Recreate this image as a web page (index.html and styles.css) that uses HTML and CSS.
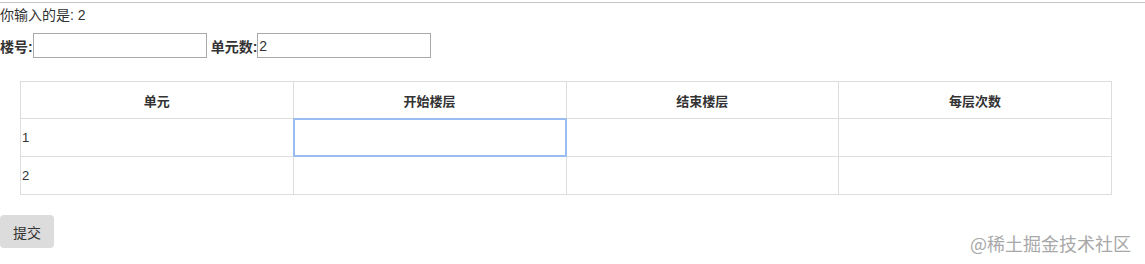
FILE: index.html
```html
<!DOCTYPE html>
<html lang="zh">
<head>
<meta charset="utf-8">
<link rel="stylesheet" href="styles.css">
</head>
<body>
<div class="topline"></div>
<p class="echo">你输入的是: 2</p>
<div class="form-row">
  <label class="lbl">楼号:</label><input class="txt" type="text">
  <label class="lbl lbl-gap">单元数:</label><input class="txt" type="text" value="2">
</div>
<table class="grid">
  <thead>
    <tr><th>单元</th><th>开始楼层</th><th>结束楼层</th><th>每层次数</th></tr>
  </thead>
  <tbody>
    <tr><td>1</td><td><div class="cell-input focused"></div></td><td></td><td></td></tr>
    <tr><td>2</td><td></td><td></td><td></td></tr>
  </tbody>
</table>
<button class="submit">提交</button>
<div class="watermark">@稀土掘金技术社区</div>
</body>
</html>
```
FILE: styles.css
```css
html, body {
  margin: 0;
  padding: 0;
  height: 264px;
  overflow: hidden;
}
body {
  font-family: "Liberation Sans", "Noto Sans CJK SC", sans-serif;
  font-size: 14px;
  color: #333;
  background: #fff;
  position: relative;
}
.topline {
  height: 1px;
  background: #c4c4c4;
  margin-top: 2px;
}
.echo {
  margin: 4px 0 0 0;
  line-height: 17px;
}
.form-row {
  display: flex;
  align-items: center;
  margin-top: 9px;
  height: 25px;
}
.lbl {
  font-weight: bold;
  color: #333;
}
.lbl-gap {
  margin-left: 4px;
}
.txt {
  box-sizing: border-box;
  width: 174px;
  height: 25px;
  border: 1px solid #a9a9a9;
  margin: 0;
  padding: 0 1px;
  font-family: "Liberation Sans", "Noto Sans CJK SC", sans-serif;
  font-size: 14px;
  color: #333;
}
.grid {
  border-collapse: collapse;
  margin: 23px 0 0 20px;
  width: 1092px;
  table-layout: fixed;
  font-size: 13px;
}
.grid th, .grid td {
  border: 1px solid #ddd;
  padding: 0;
}
.grid th {
  height: 36px;
  font-weight: bold;
  text-align: center;
  color: #333;
}
.grid td {
  height: 37px;
  text-align: left;
  padding-left: 1px;
  position: relative;
}
.cell-input {
  position: absolute;
  inset: -1px;
  box-sizing: border-box;
  border: 2px solid #9bbcf0;
  border-radius: 1px;
}
.submit {
  display: block;
  margin-top: 20px;
  width: 54px;
  height: 33px;
  border: none;
  border-radius: 4px;
  background: #dcdcdc;
  font-family: "Liberation Sans", "Noto Sans CJK SC", sans-serif;
  font-size: 14px;
  color: #333;
  padding: 0;
}
.watermark {
  position: absolute;
  right: 14px;
  top: 232px;
  font-family: "Noto Sans CJK SC", sans-serif;
  font-size: 18px;
  line-height: 22px;
  color: #a8a8a8;
}
```
